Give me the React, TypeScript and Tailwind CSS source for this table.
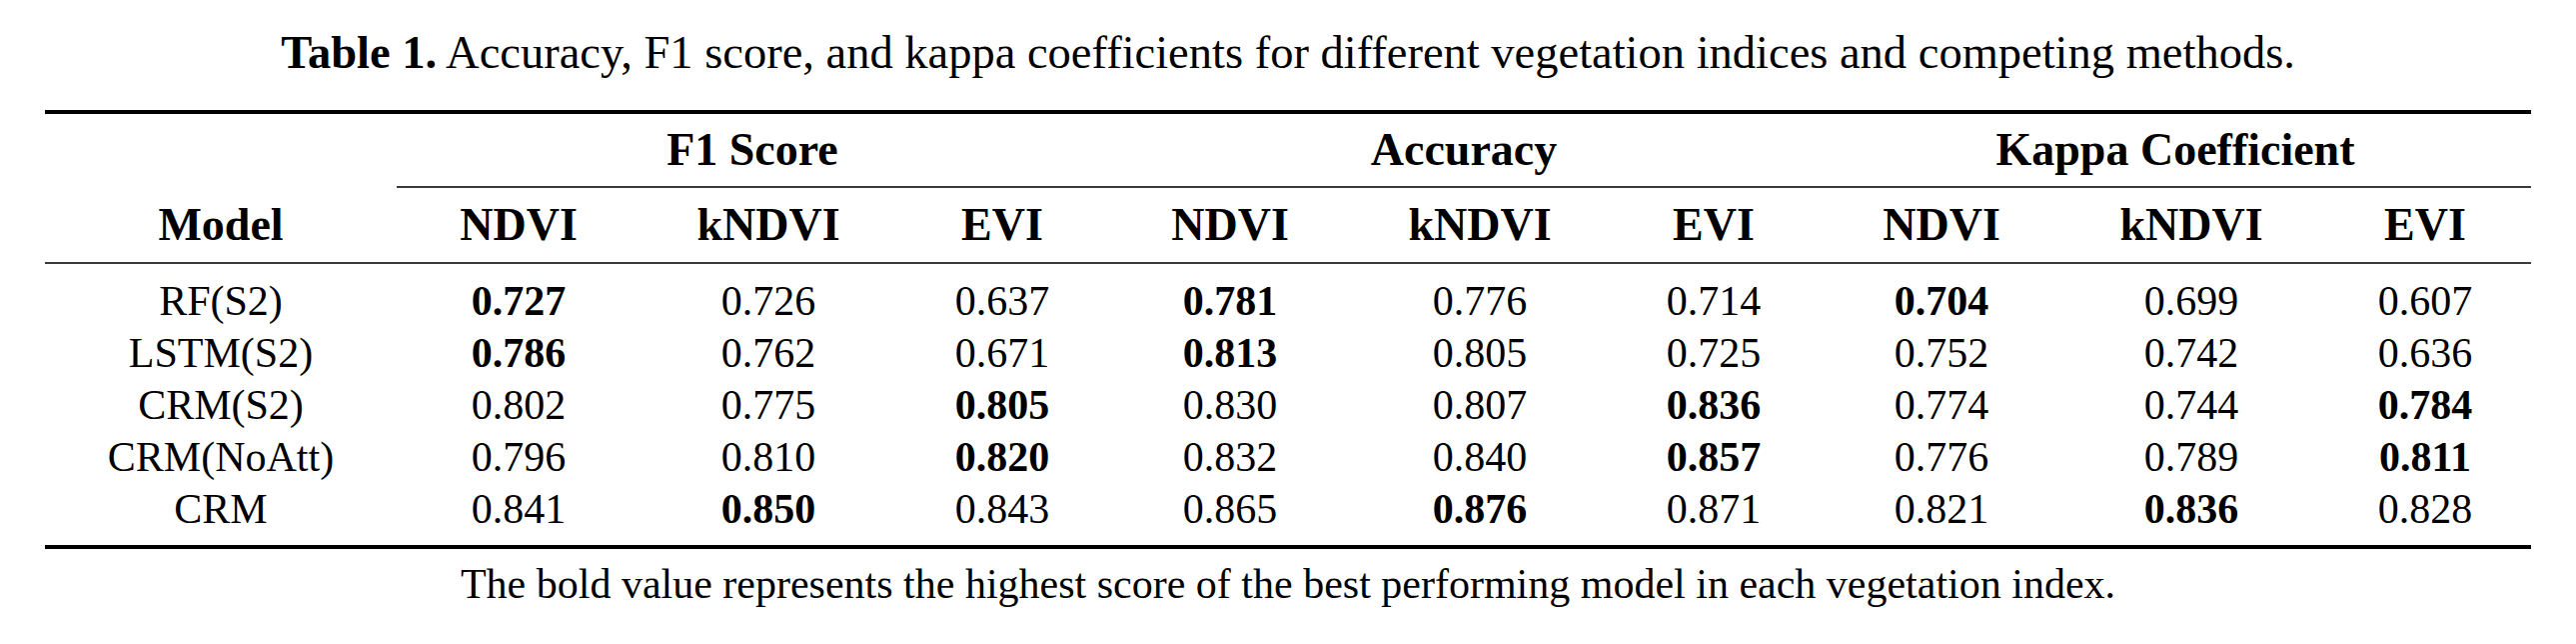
import React from "react";

type Row = { model: string; vals: string[]; bold: number[] };

const ROWS: Row[] = [
  { model: "RF(S2)", vals: ["0.727", "0.726", "0.637", "0.781", "0.776", "0.714", "0.704", "0.699", "0.607"], bold: [0, 3, 6] },
  { model: "LSTM(S2)", vals: ["0.786", "0.762", "0.671", "0.813", "0.805", "0.725", "0.752", "0.742", "0.636"], bold: [0, 3] },
  { model: "CRM(S2)", vals: ["0.802", "0.775", "0.805", "0.830", "0.807", "0.836", "0.774", "0.744", "0.784"], bold: [2, 5, 8] },
  { model: "CRM(NoAtt)", vals: ["0.796", "0.810", "0.820", "0.832", "0.840", "0.857", "0.776", "0.789", "0.811"], bold: [2, 5, 8] },
  { model: "CRM", vals: ["0.841", "0.850", "0.843", "0.865", "0.876", "0.871", "0.821", "0.836", "0.828"], bold: [1, 4, 7] },
];

const GROUPS = ["F1 Score", "Accuracy", "Kappa Coefficient"];
const INDICES = ["NDVI", "kNDVI", "EVI"];

const cols = "grid grid-cols-[352px_244px_256px_212px_244px_256px_212px_244px_256px_212px]";

export default function App() {
  return (
    <div className="min-h-screen bg-white font-['Liberation_Serif','Times_New_Roman',serif] text-black">
      {/* Caption */}
      <p className="pt-[25px] text-center text-[46.5px] leading-[56px]">
        <span className="font-bold">Table 1.</span> Accuracy, F1 score, and kappa coefficients for different vegetation
        indices and competing methods.
      </p>

      <div className="mx-auto mt-[29px] w-[2488px]">
        <div className="h-[4px] bg-black" />

        {/* Group headers */}
        <div className="grid h-[72px] grid-cols-[352px_712px_712px_712px] items-center">
          <div />
          {GROUPS.map((g) => (
            <div key={g} className="text-center text-[46px] font-bold leading-[52px]">
              {g}
            </div>
          ))}
        </div>
        <div className="ml-[352px] h-[2px] bg-[#3a3a3a]" />

        {/* Column headers */}
        <div className={`${cols} h-[74px] items-center`}>
          <div className="text-center text-[46px] font-bold leading-[52px]">Model</div>
          {GROUPS.map((g) =>
            INDICES.map((i) => (
              <div key={g + i} className="text-center text-[46px] font-bold leading-[52px]">
                {i}
              </div>
            ))
          )}
        </div>
        <div className="h-[2px] bg-[#3a3a3a]" />

        {/* Body */}
        <div className="pt-[11px] pb-[10px]">
          {ROWS.map((r) => (
            <div key={r.model} className={`${cols} h-[52px] items-center`}>
              <div className="text-center text-[42px] leading-[52px]">{r.model}</div>
              {r.vals.map((v, idx) => (
                <div
                  key={idx}
                  className={`text-center text-[42px] leading-[52px] ${r.bold.includes(idx) ? "font-bold" : ""}`}
                >
                  {v}
                </div>
              ))}
            </div>
          ))}
        </div>
        <div className="h-[4px] bg-black" />

        <p className="mt-[9px] text-center text-[42px] leading-[52px]">
          The bold value represents the highest score of the best performing model in each vegetation index.
        </p>
      </div>
    </div>
  );
}
